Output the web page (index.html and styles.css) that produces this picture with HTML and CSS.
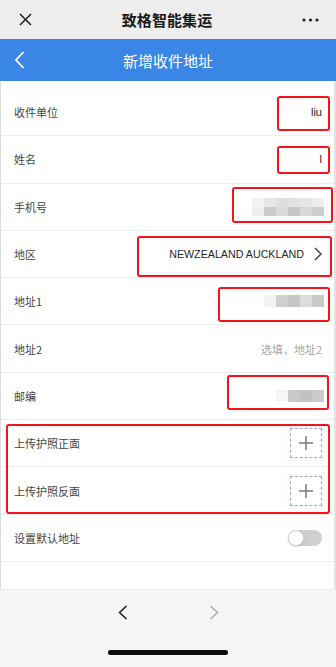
FILE: index.html
```html
<!DOCTYPE html>
<html lang="zh">
<head>
<meta charset="utf-8">
<title>新增收件地址</title>
<link rel="stylesheet" href="styles.css">
</head>
<body>
<div class="page">
  <header class="topbar">
    <svg class="ic-close" width="13" height="13" viewBox="0 0 13 13"><path d="M1 1 L12 12 M12 1 L1 12" stroke="#1e1e1e" stroke-width="1.5" fill="none"/></svg>
    <div class="topbar-title">致格智能集运</div>
    <svg class="ic-more" width="17" height="4" viewBox="0 0 17 4"><circle cx="2" cy="2" r="1.6" fill="#222"/><circle cx="8.5" cy="2" r="1.6" fill="#222"/><circle cx="15" cy="2" r="1.6" fill="#222"/></svg>
  </header>
  <nav class="navbar">
    <svg class="ic-back" width="11" height="18" viewBox="0 0 11 18"><path d="M9.5 1 L2 9 L9.5 17" stroke="#fff" stroke-width="1.8" fill="none"/></svg>
    <div class="navbar-title">新增收件地址</div>
    <span></span>
  </nav>
  <main class="form">
    <div class="row"><span class="label">收件单位</span><span class="value">liu</span></div>
    <div class="row"><span class="label">姓名</span><span class="value">l</span></div>
    <div class="row"><span class="label">手机号</span>
      <span class="blur blur-phone">
        <i style="background:#f3f3f3"></i><i style="background:#e6e6e6"></i><i style="background:#dedede"></i><i style="background:#e2e2e2"></i><i style="background:#e6e6e6"></i><i style="background:#ededed"></i>
        <i style="background:#efefef"></i><i style="background:#cacaca"></i><i style="background:#dadada"></i><i style="background:#c6c6c6"></i><i style="background:#d8d8d8"></i><i style="background:#cdcdcd"></i>
      </span>
    </div>
    <div class="row"><span class="label">地区</span>
      <span class="region"><span class="value">NEWZEALAND AUCKLAND</span>
        <svg width="8" height="14" viewBox="0 0 8 14"><path d="M1 1 L7 7 L1 13" stroke="#333" stroke-width="1.3" fill="none"/></svg>
      </span>
    </div>
    <div class="row"><span class="label">地址1</span>
      <span class="blur blur-line">
        <i style="background:#f3f3f3"></i><i style="background:#cfcfcf"></i><i style="background:#c6c6c6"></i><i style="background:#dcdcdc"></i><i style="background:#c9c9c9"></i>
      </span>
    </div>
    <div class="row"><span class="label">地址2</span><span class="placeholder">选填，地址2</span></div>
    <div class="row"><span class="label">邮编</span>
      <span class="blur blur-line">
        <i style="background:#f5f5f5"></i><i style="background:#c9c9c9"></i><i style="background:#c2c2c2"></i><i style="background:#cbcbcb"></i>
      </span>
    </div>
    <div class="row"><span class="label">上传护照正面</span>
      <span class="upload"><svg width="14" height="14" viewBox="0 0 14 14"><path d="M7 0 V14 M0 7 H14" stroke="#7a7a7a" stroke-width="1.5"/></svg></span>
    </div>
    <div class="row"><span class="label">上传护照反面</span>
      <span class="upload"><svg width="14" height="14" viewBox="0 0 14 14"><path d="M7 0 V14 M0 7 H14" stroke="#7a7a7a" stroke-width="1.5"/></svg></span>
    </div>
    <div class="row"><span class="label">设置默认地址</span>
      <span class="toggle"><span class="knob"></span></span>
    </div>
  </main>
  <footer class="toolbar">
    <div class="toolbar-nav">
      <svg width="10" height="15" viewBox="0 0 10 15"><path d="M8.5 1 L1.5 7.5 L8.5 14" stroke="#111" stroke-width="1.4" fill="none"/></svg>
      <svg width="10" height="15" viewBox="0 0 10 15"><path d="M1.5 1 L8.5 7.5 L1.5 14" stroke="#a8a8a8" stroke-width="1.4" fill="none"/></svg>
    </div>
    <div class="home-bar"></div>
  </footer>

  <div class="annot a1"></div>
  <div class="annot a2"></div>
  <div class="annot a3"></div>
  <div class="annot a4"></div>
  <div class="annot a5"></div>
  <div class="annot a6"></div>
  <div class="annot a7"></div>
</div>
</body>
</html>
```

FILE: styles.css
```css
* { box-sizing: border-box; }
html, body { margin: 0; padding: 0; }
body {
  width: 336px;
  height: 667px;
  overflow: hidden;
  font-family: "Noto Sans CJK SC", "Liberation Sans", sans-serif;
  background: #fff;
}
.page {
  position: relative;
  width: 336px;
  height: 667px;
  display: flex;
  flex-direction: column;
}
.topbar {
  height: 39px;
  flex: none;
  background: #ededed;
  display: flex;
  align-items: center;
  justify-content: space-between;
  padding: 0 17px 0 19px;
}
.topbar-title {
  font-size: 15px;
  font-weight: 700;
  color: #1a1a1a;
  letter-spacing: 0.1px;
}
.ic-more { margin-top: 1px; }
.navbar {
  height: 42px;
  flex: none;
  background: #3a86e6;
  display: grid;
  grid-template-columns: 40px 1fr 40px;
  align-items: center;
}
.ic-back { margin-left: 14px; }
.navbar-title {
  text-align: center;
  color: #fff;
  font-size: 15px;
  font-weight: 400;
}
.form {
  flex: 1;
  background: #fff;
  padding-top: 8px;
  border-left: 1px solid #dcdcdc;
  border-right: 2px solid #e2e2e2;
}
.row {
  height: 47.3px;
  border-bottom: 1px solid #ededed;
  display: flex;
  align-items: center;
  justify-content: space-between;
  padding: 0 12px 0 13px;
}
.label {
  font-size: 11px;
  color: #444;
}
.value {
  font-family: "Liberation Sans", "Noto Sans CJK SC", sans-serif;
  font-size: 11px;
  color: #1e1e1e;
}
.placeholder {
  font-size: 11px;
  color: #a6a6a6;
}
.region {
  display: flex;
  align-items: center;
  gap: 10px;
}
.region .value { font-size: 10.7px; color: #262626; }
.blur {
  display: grid;
  grid-auto-flow: row;
}
.blur i { display: block; }
.blur-phone {
  grid-template-columns: repeat(6, 12px);
  grid-template-rows: 9px 9px;
  margin-right: -2px;
}
.blur-line {
  grid-auto-flow: column;
  grid-auto-columns: 12px;
  grid-template-rows: 12px;
  margin-right: -2px;
}
.upload {
  width: 32px;
  height: 30px;
  border: 1px dashed #a6a6a6;
  display: flex;
  align-items: center;
  justify-content: center;
  box-shadow: 0 0 0 3px #fafafa;
}
.toggle {
  width: 34px;
  height: 16px;
  border-radius: 8px;
  background: #cfcfcf;
  position: relative;
}
.knob {
  position: absolute;
  left: 0;
  top: 0;
  width: 16px;
  height: 16px;
  border-radius: 50%;
  background: #fff;
  border: 1px solid #d6d6d6;
  box-shadow: 0 1px 2px rgba(0,0,0,0.15);
}
.toolbar {
  height: 78px;
  flex: none;
  background: #f6f6f6;
  border-top: 1px solid #eeeeee;
  display: flex;
  flex-direction: column;
  align-items: center;
}
.toolbar-nav {
  display: flex;
  gap: 81px;
  margin-top: 15px;
}
.home-bar {
  margin-top: 30px;
  width: 120px;
  height: 5px;
  border-radius: 3px;
  background: #0c0c0c;
}
.annot {
  position: absolute;
  border: 2px solid #f5121b;
  border-radius: 3px;
}
.a1 { left: 277px; top: 96px; width: 53px; height: 35px; }
.a2 { left: 277px; top: 146px; width: 53px; height: 28px; }
.a3 { left: 232px; top: 187px; width: 101px; height: 36px; }
.a4 { left: 137px; top: 236px; width: 195px; height: 41px; }
.a5 { left: 218px; top: 287px; width: 112px; height: 35px; }
.a6 { left: 227px; top: 375px; width: 102px; height: 35px; }
.a7 { left: 6px; top: 424px; width: 324px; height: 90px; }
```
